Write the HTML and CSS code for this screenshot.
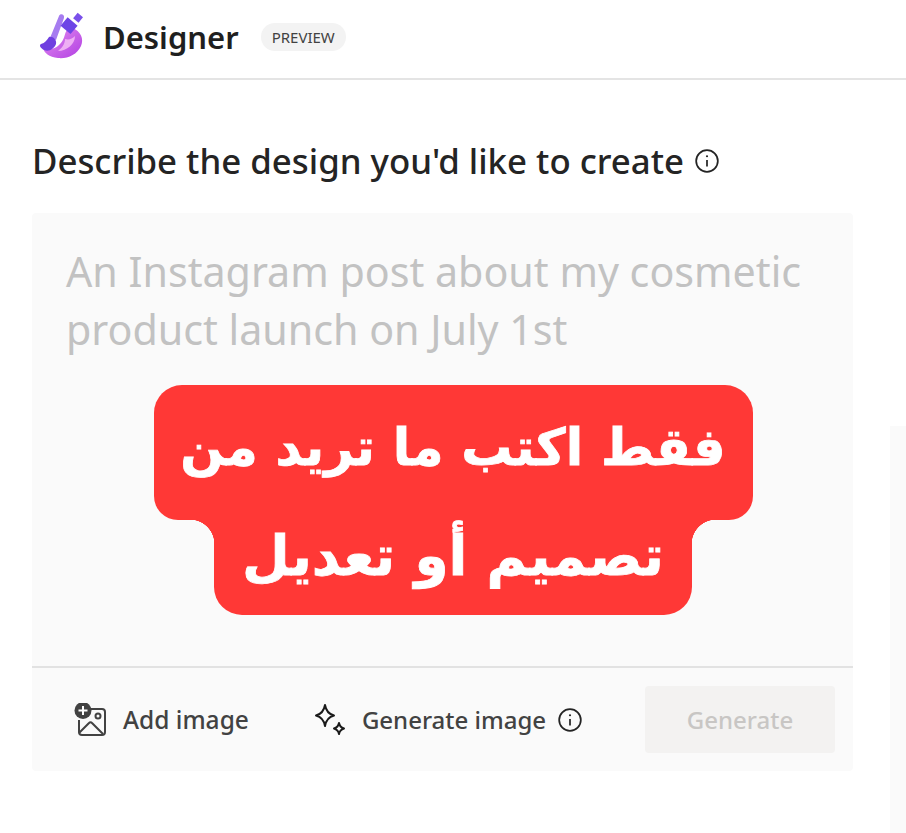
FILE: index.html
```html
<!DOCTYPE html>
<html lang="en">
<head>
  <meta charset="UTF-8" />
  <meta name="viewport" content="width=device-width, initial-scale=1.0"/>
  <title>Designer</title>
  <link rel="stylesheet" href="styles.css">
</head>
<body>

  <header>
    <svg class="logo" viewBox="0 0 46 48" width="46" height="48">
      <defs>
        <linearGradient id="swirl" x1="0" y1="0" x2="1" y2="1">
          <stop offset="0" stop-color="#e58ff0"/>
          <stop offset="1" stop-color="#b13fe2"/>
        </linearGradient>
      </defs>
      <path d="M34 16C43 19 46 27 43 34C39 43 29 47 20 46C11 45 6 41 5 36C12 38 17 37 21 33C27 28 26 22 29 18Z" fill="url(#swirl)"/>
      <path d="M27 27C31 28 34 27 37 24C37 32 29 39 20 39C24 36 27 32 27 27Z" fill="#eeb0f4"/>
      <path d="M21 4C22 1 27 2 26 6L18 28L12 26Z" fill="#a67cf0"/>
      <path d="M11 25C15 24 19 28 18 32C16 37 11 40 6 38C2 36 1 33 3 32C7 31 9 28 11 25Z" fill="#6f3fe0"/>
      <rect x="25" y="8" width="13" height="11" transform="rotate(40 31 13)" fill="#6d45e6"/>
      <rect x="37" y="2" width="7" height="7" transform="rotate(40 40 5)" fill="#7a50ea"/>
    </svg>
    <h1>Designer</h1>
    <span class="badge">PREVIEW</span>
  </header>

  <main>
    <h2>Describe the design you'd like to create
      <svg class="info info-lg" viewBox="0 0 24 24" width="26" height="26">
        <circle cx="12" cy="12" r="10"/><path d="M12 11v6"/><circle class="dot" cx="12" cy="7.600" r="1"/>
      </svg>
    </h2>

    <div class="prompt-box">
      <div class="prompt-body">
        <p class="placeholder">An Instagram post about my cosmetic product launch on July 1st</p>
        <div class="callout" lang="ar" dir="rtl">
          <div class="callout-line first">فقط اكتب ما تريد من</div>
          <div class="callout-line second">تصميم أو تعديل</div>
        </div>
      </div>

      <div class="prompt-actions">
        <button class="action add">
          <svg viewBox="0 0 34 34" width="34" height="34">
            <path class="line" d="M16 6H28a3 3 0 0 1 3 3V29a3 3 0 0 1-3 3H8a3 3 0 0 1-3-3V17"/>
            <path class="line" d="M5 30L15 20a2 2 0 0 1 3 0L29 31"/>
            <circle class="line" cx="24" cy="13" r="2.500"/>
            <circle class="plus-bg" cx="9" cy="7.500" r="8.500"/>
            <path class="plus" d="M9 3V12M4.500 7.500H13.500"/>
          </svg>
          Add image
        </button>
        <button class="action generate">
          <svg viewBox="0 0 34 34" width="34" height="34">
            <path class="spark" d="M12 2C13 8 15.500 11 21 12.500C15.500 14 13 17 12 23C11 17 8.500 14 3 12.500C8.500 11 11 8 12 2Z"/>
            <path class="spark" d="M26 20C26.500 23 28 24.500 31 25.500C28 26.500 26.500 28 26 31C25.500 28 24 26.500 21 25.500C24 24.500 25.500 23 26 20Z"/>
          </svg>
          Generate image
          <svg class="info" viewBox="0 0 24 24" width="26" height="26">
            <circle cx="12" cy="12" r="10"/><path d="M12 11v6"/><circle class="dot" cx="12" cy="7.600" r="1"/>
          </svg>
        </button>
        <button class="generate-btn" disabled>Generate</button>
      </div>
    </div>
  </main>

  <div class="side-panel"></div>

</body>
</html>
```

FILE: styles.css
```css
body {
  margin: 0;
  font-family: "Noto Sans", "Open Sans", sans-serif;
  background-color: #fff;
  color: #242424;
  height: 833px;
  overflow: hidden;
  position: relative;
}

header {
  height: 80px;
  box-sizing: border-box;
  border-bottom: 2px solid #e4e4e4;
  padding: 0 0 4px 38px;
  display: flex;
  align-items: center;
}

.logo {
  margin-right: 19px;
  margin-top: -3px;
}

header h1 {
  margin: 0;
  font-size: 31px;
  font-weight: 600;
  color: #1f1f1f;
}

.badge {
  margin-left: 22px;
  background: #f3f3f3;
  color: #424242;
  font-size: 15px;
  line-height: 28px;
  padding: 0 11px;
  border-radius: 14px;
}

main {
  padding: 58px 0 0 32px;
  width: 821px;
}

h2 {
  margin: 0 0 29px;
  font-size: 34.800px;
  line-height: 46px;
  font-weight: 500;
  color: #242424;
  display: flex;
  align-items: center;
  gap: 10px;
  white-space: nowrap;
}

.info {
  fill: none;
  stroke: #242424;
  stroke-width: 1.6;
}

.info .dot {
  fill: #242424;
  stroke: none;
}

.prompt-box {
  background: #fafafa;
  border-radius: 4px;
}

.prompt-body {
  height: 455px;
  box-sizing: border-box;
  padding: 29px 34px 0;
  border-bottom: 2px solid #e2e2e2;
}

.placeholder {
  margin: 0;
  font-size: 41.200px;
  line-height: 58px;
  color: #c2c2c2;
}

.callout {
  margin-top: 27px;
  margin-left: 21px;
  font-family: "DejaVu Sans", sans-serif;
  font-weight: 700;
  color: #fff;
  display: flex;
  flex-direction: column;
  align-items: center;
  -webkit-text-stroke: 0.8px #fff;
}

.callout-line {
  background: #ff3836;
  text-align: center;
  position: relative;
  white-space: nowrap;
}

.callout-line.first {
  width: 599px;
  height: 135px;
  line-height: 125px;
  font-size: 51px;
  border-radius: 28px 28px 24px 24px;
}

.callout-line.second {
  width: 478px;
  height: 95px;
  line-height: 72px;
  font-size: 55px;
  border-radius: 0 0 28px 28px;
}

.callout-line.second::before,
.callout-line.second::after {
  content: "";
  position: absolute;
  top: 0;
  width: 24px;
  height: 24px;
}

.callout-line.second::before {
  right: 100%;
  background: radial-gradient(circle at 0 100%, transparent 24px, #ff3836 24.500px);
}

.callout-line.second::after {
  left: 100%;
  background: radial-gradient(circle at 100% 100%, transparent 24px, #ff3836 24.500px);
}

.prompt-actions {
  height: 103px;
  box-sizing: border-box;
  padding: 0 18px 0 42px;
  display: flex;
  align-items: center;
}

.action {
  background: none;
  border: none;
  padding: 0;
  font: inherit;
  font-size: 24.500px;
  font-weight: 500;
  color: #424242;
  display: flex;
  align-items: center;
  gap: 15px;
}

.action.add {
  margin-right: 64px;
}

.action.generate {
  font-size: 24px;
}

.action.generate .info {
  margin-left: -4px;
}

.action svg .line {
  fill: none;
  stroke: #424242;
  stroke-width: 2;
}

.plus-bg {
  fill: #424242;
}

.plus {
  stroke: #fff;
  stroke-width: 2;
}

.spark {
  fill: none;
  stroke: #1a1a1a;
  stroke-width: 2;
  stroke-linejoin: round;
}

.generate-btn {
  margin-left: auto;
  width: 190px;
  height: 67px;
  background: #f3f2f1;
  border: none;
  border-radius: 4px;
  font: inherit;
  font-size: 24px;
  font-weight: 500;
  color: #c8c6c4;
}

.side-panel {
  position: absolute;
  left: 890px;
  top: 426px;
  width: 16px;
  bottom: 0;
  background: #fafafa;
}
```
